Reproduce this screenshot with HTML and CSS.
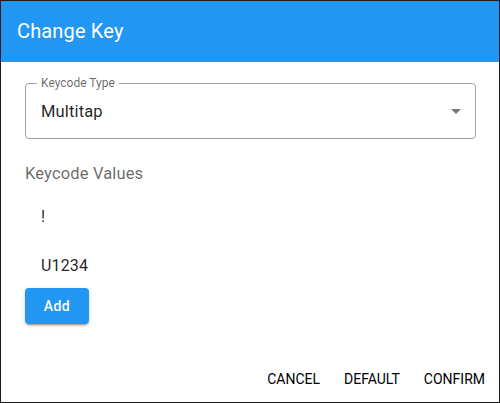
FILE: index.html
```html
<!DOCTYPE html>
<html>
<head>
<meta charset="utf-8">
<link rel="stylesheet" href="styles.css">
</head>
<body>
<div class="dialog">
  <div class="header">Change Key</div>
  <div class="content">
    <div class="select">
      <span class="select-label">Keycode Type</span>
      <span class="select-value">Multitap</span>
      <svg class="arrow" width="10" height="5" viewBox="7 10 10 5"><path d="M7 10l5 5 5-5z" fill="#757575"/></svg>
    </div>
    <div class="section-label">Keycode Values</div>
    <div class="values">
      <div class="value">!</div>
      <div class="value">U1234</div>
    </div>
    <button class="add-btn">Add</button>
  </div>
  <div class="actions">
    <button class="text-btn">Cancel</button>
    <button class="text-btn">Default</button>
    <button class="text-btn">Confirm</button>
  </div>
</div>
</body>
</html>
```
FILE: styles.css
```css
html, body {
  margin: 0;
  padding: 0;
  background: #fff;
}
body {
  font-family: Roboto, "Liberation Sans", Arial, sans-serif;
  color: rgba(0, 0, 0, 0.87);
}
.dialog {
  width: 500px;
  height: 403px;
  box-sizing: border-box;
  border: 1px solid #1c1c1c;
  display: flex;
  flex-direction: column;
  background: #fff;
}
.header {
  height: 61px;
  flex: none;
  background: #2196f3;
  color: #fff;
  font-size: 20px;
  font-weight: 400;
  letter-spacing: 0.15px;
  padding: 0 0 2px 16px;
  box-sizing: border-box;
  display: flex;
  align-items: center;
}
.content {
  flex: 1;
  padding: 21px 23px 0 24px;
  display: flex;
  flex-direction: column;
  align-items: flex-start;
}
.select {
  position: relative;
  align-self: stretch;
  height: 56px;
  box-sizing: border-box;
  border: 1px solid #a3a3a3;
  border-radius: 4px;
  display: flex;
  align-items: center;
  padding: 0 14px 0 15px;
}
.select-label {
  position: absolute;
  left: 11px;
  top: -9px;
  font-size: 12px;
  line-height: 16px;
  padding: 0 4px;
  background: #fff;
  color: rgba(0, 0, 0, 0.6);
}
.select-value {
  font-size: 16.5px;
  letter-spacing: 0.15px;
  line-height: 19px;
}
.arrow {
  margin-left: auto;
  display: block;
}
.section-label {
  margin-top: 25px;
  font-size: 16.5px;
  letter-spacing: 0.15px;
  line-height: 19px;
  color: rgba(0, 0, 0, 0.6);
}
.values {
  margin-top: 24px;
  display: flex;
  flex-direction: column;
  gap: 30px;
  padding-left: 16px;
}
.value {
  font-size: 16px;
  letter-spacing: 0.15px;
  line-height: 19px;
}
.add-btn {
  margin-top: 13px;
  width: 64px;
  height: 36px;
  border: none;
  border-radius: 4px;
  background: #2196f3;
  color: #fff;
  font-family: inherit;
  font-size: 14px;
  font-weight: 500;
  letter-spacing: 0.4px;
  box-shadow: 0 3px 1px -2px rgba(0,0,0,0.2), 0 2px 2px 0 rgba(0,0,0,0.14), 0 1px 5px 0 rgba(0,0,0,0.12);
  padding: 0;
}
.actions {
  flex: none;
  display: flex;
  justify-content: flex-end;
  gap: 8px;
  padding: 0 6px 5px 8px;
}
.text-btn {
  height: 36px;
  min-width: 64px;
  padding: 0 8px;
  border: none;
  background: transparent;
  font-family: inherit;
  font-size: 14px;
  font-weight: 400;
  letter-spacing: 0;
  text-transform: uppercase;
  color: #000;
}
```
